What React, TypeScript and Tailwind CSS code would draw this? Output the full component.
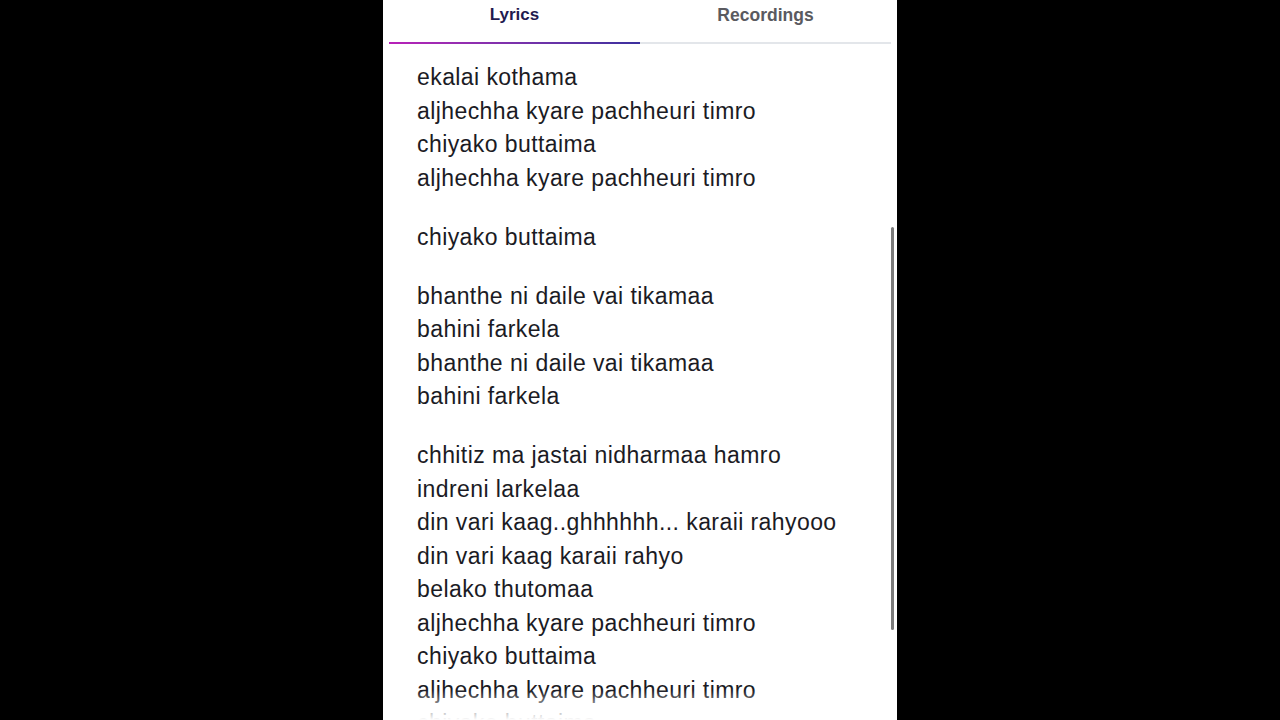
import React from "react";

const stanzas: string[][] = [
  [
    "ekalai kothama",
    "aljhechha kyare pachheuri timro",
    "chiyako buttaima",
    "aljhechha kyare pachheuri timro",
  ],
  ["chiyako buttaima"],
  [
    "bhanthe ni daile vai tikamaa",
    "bahini farkela",
    "bhanthe ni daile vai tikamaa",
    "bahini farkela",
  ],
  [
    "chhitiz ma jastai nidharmaa hamro",
    "indreni larkelaa",
    "din vari kaag..ghhhhhh... karaii rahyooo",
    "din vari kaag karaii rahyo",
    "belako thutomaa",
    "aljhechha kyare pachheuri timro",
    "chiyako buttaima",
    "aljhechha kyare pachheuri timro",
    "chiyako buttaima",
  ],
];

export default function App() {
  return (
    <div className="w-[1280px] h-[720px] bg-black flex justify-center overflow-hidden">
      <div
        className="relative w-[514px] h-[720px] bg-white overflow-hidden"
        style={{ fontFamily: '"Liberation Sans", Arial, Helvetica, sans-serif' }}
      >
        <div className="flex mx-[6px] h-[45px]">
          <div className="w-1/2 flex flex-col">
            <div className="h-[29px] flex items-center justify-center text-[17px] font-bold text-[#1f1a4f] pt-[1px]">
              Lyrics
            </div>
            <div className="mt-auto mb-[1px] h-[2px] bg-gradient-to-r from-[#b81fb8] to-[#3b2f9e]" />
          </div>
          <div className="w-1/2 flex flex-col">
            <div className="h-[29px] flex items-center justify-center text-[17.5px] font-bold text-[#5a5a60] pt-[1px]">
              Recordings
            </div>
            <div className="mt-auto mb-[1px] h-[2px] bg-[#e3e6ea]" />
          </div>
        </div>
        <div className="pl-[34px] pt-[16px] text-[23px] leading-[33.5px] tracking-[0.42px] text-[#1b1b24]">
          {stanzas.map((s, i) => (
            <div key={i} className="mb-[25.5px]">
              {s.map((l, j) => (
                <div key={j} className="whitespace-nowrap">
                  {l}
                </div>
              ))}
            </div>
          ))}
        </div>
        <div className="absolute left-0 right-0 bottom-0 h-[30px] bg-gradient-to-b from-white/0 to-white" />
        <div className="absolute left-[508px] top-[227px] w-[3px] h-[403px] rounded-full bg-[#7c7c7c]" />
      </div>
    </div>
  );
}
